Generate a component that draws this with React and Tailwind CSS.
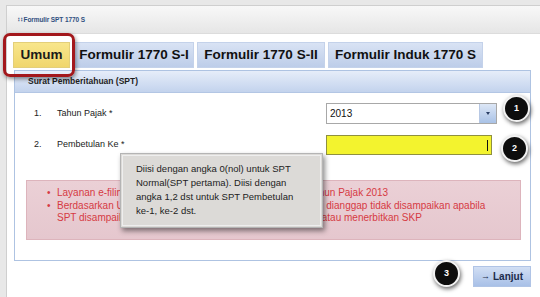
import React from "react";

function Badge({ n, className }) {
  return (
    <div
      className={
        "absolute w-[27px] h-[27px] rounded-full bg-[#0d0d0d] border-[2px] border-[#f2f2f2] shadow-[1px_2px_4px_rgba(0,0,0,0.6)] flex items-center justify-center text-white text-[9px] font-bold " +
        className
      }
    >
      {n}
    </div>
  );
}

export default function App() {
  return (
    <div className="relative w-[540px] h-[297px] overflow-hidden bg-[#e8e8e8] pt-[5px] pl-[6px] font-['Liberation_Sans',Arial,sans-serif]">
      <div className="h-full flex flex-col bg-[#fbfbfb] border-l border-t border-[#cfcfcf]">
        {/* window header */}
        <div className="h-[28px] shrink-0 bg-gradient-to-b from-[#f8f8f8] to-[#e6e6e6] border-b border-[#dcdcdc] flex items-center pl-[11px]">
          <span className="text-[6.5px] font-bold text-[#2f4f7f] tracking-[-0.1px]">∷ Formulir SPT 1770 S</span>
        </div>
        <div className="flex-1 flex flex-col bg-white pl-[7px] pr-[9px] pt-[8px]">
          {/* tabs */}
          <div className="flex gap-[3px] -ml-[1px] h-[26px]">
            <div className="w-[57px] bg-gradient-to-b from-[#f8e68c] to-[#f0d66c] border border-[#e3cf7a] flex items-center justify-center text-[13.5px] font-bold text-[#1a1a1a]">
              Umum
            </div>
            <div className="w-[120px] ml-[1px] bg-gradient-to-b from-[#d9e3f4] to-[#bdcde9] border border-[#c4d2ea] flex items-center justify-center text-[13.5px] font-bold text-[#111]">
              Formulir 1770 S-I
            </div>
            <div className="w-[128px] bg-gradient-to-b from-[#d9e3f4] to-[#bdcde9] border border-[#c4d2ea] flex items-center justify-center text-[13.5px] font-bold text-[#111]">
              Formulir 1770 S-II
            </div>
            <div className="w-[155px] bg-gradient-to-b from-[#d9e3f4] to-[#bdcde9] border border-[#c4d2ea] flex items-center justify-center text-[13.5px] font-bold text-[#111]">
              Formulir Induk 1770 S
            </div>
          </div>
          {/* panel */}
          <div className="mt-[2px] h-[191px] shrink-0 border border-[#aec3e2] bg-white flex flex-col">
            <div className="h-[22px] shrink-0 bg-gradient-to-b from-[#e6edf9] to-[#c3d3ed] border-b border-[#b3c6e4] flex items-center pl-[13px]">
              <span className="text-[8.5px] font-bold text-[#1e1e1e]">Surat Pemberitahuan (SPT)</span>
            </div>
            <div className="flex flex-col pt-[10px] pl-[19px] pr-[9px]">
              <div className="flex items-center h-[21px]">
                <span className="w-[23px] text-[9px] text-[#222]">1.</span>
                <span className="w-[269px] text-[9px] text-[#222]">Tahun Pajak *</span>
                <div className="w-[171px] h-[21px] border border-[#a8a8a8] bg-white flex items-center">
                  <span className="flex-1 pl-[3px] text-[10px] text-[#111]">2013</span>
                  <div className="w-[17px] h-full bg-gradient-to-b from-[#dde7f6] to-[#a9c2e6] border-l border-[#b7c8e4] flex items-center justify-center">
                    <div className="w-0 h-0 border-l-[2.5px] border-r-[2.5px] border-t-[3px] border-l-transparent border-r-transparent border-t-[#2a3f66]" />
                  </div>
                </div>
              </div>
              <div className="flex items-center h-[20px] mt-[11px]">
                <span className="w-[23px] text-[9px] text-[#222]">2.</span>
                <span className="w-[269px] text-[9px] text-[#222]">Pembetulan Ke *</span>
                <div className="w-[166px] h-[20px] border border-[#8f9040] bg-[#f3f32e] flex items-center justify-end pr-[3px]">
                  <div className="w-[1px] h-[11px] bg-[#111]" />
                </div>
              </div>
              <div className="mt-[25px] -ml-[8px] h-[60px] bg-gradient-to-b from-[#ebd0d6] to-[#e5c7ce] border border-[#ddb4bc] pl-[20px] pt-[6px] text-[10px] leading-[12.5px] text-[#d63a43]">
                <div className="flex">
                  <span className="w-[10px]">•</span>
                  <span>Layanan e-filing untuk pelaporan SPT Tahunan PPh OP, Tahun Pajak 2013</span>
                </div>
                <div className="flex">
                  <span className="w-[10px]">•</span>
                  <span>
                    Berdasarkan Undang-Undang KUP Pasal 3 ayat (7), SPT ini dianggap tidak disampaikan apabila
                    <br />
                    SPT disampaikan setelah DJP melaksanakan pemeriksaan atau menerbitkan SKP
                  </span>
                </div>
              </div>
            </div>
          </div>
          {/* bottom bar */}
          <div className="flex justify-end pt-[5px]">
            <div className="w-[58px] h-[21px] bg-gradient-to-b from-[#d2dff4] to-[#a8c0e7] border border-[#b0c4e6] flex items-center justify-center gap-[3px] text-[10px] font-bold text-[#1c2b4a]">
              <span className="text-[9px]">→</span>
              <span>Lanjut</span>
            </div>
          </div>
        </div>
      </div>

      {/* red highlight around Umum tab */}
      <div className="absolute left-[3px] top-[33px] w-[72px] h-[44px] rounded-[7px] border-[3px] border-[#a3181c] shadow-[1px_2px_4px_rgba(0,0,0,0.45)]" />

      {/* tooltip */}
      <div className="absolute left-[120px] top-[153px] w-[203px] h-[75px] bg-[#dcdad7] border border-[#b4b4b4] shadow-[2px_3px_5px_rgba(0,0,0,0.45)] pl-[15px] pt-[8px] text-[9.5px] leading-[14px] text-[#222]">
        <div className="absolute inset-[1px] border border-[#eeeeee] pointer-events-none" />
        Diisi dengan angka 0(nol) untuk SPT
        <br />
        Normal(SPT pertama). Diisi dengan
        <br />
        angka 1,2 dst untuk SPT Pembetulan
        <br />
        ke-1, ke-2 dst.
      </div>

      <Badge n="1" className="left-[503px] top-[95px]" />
      <Badge n="2" className="left-[501px] top-[135px]" />
      <Badge n="3" className="left-[433px] top-[260px]" />
    </div>
  );
}
